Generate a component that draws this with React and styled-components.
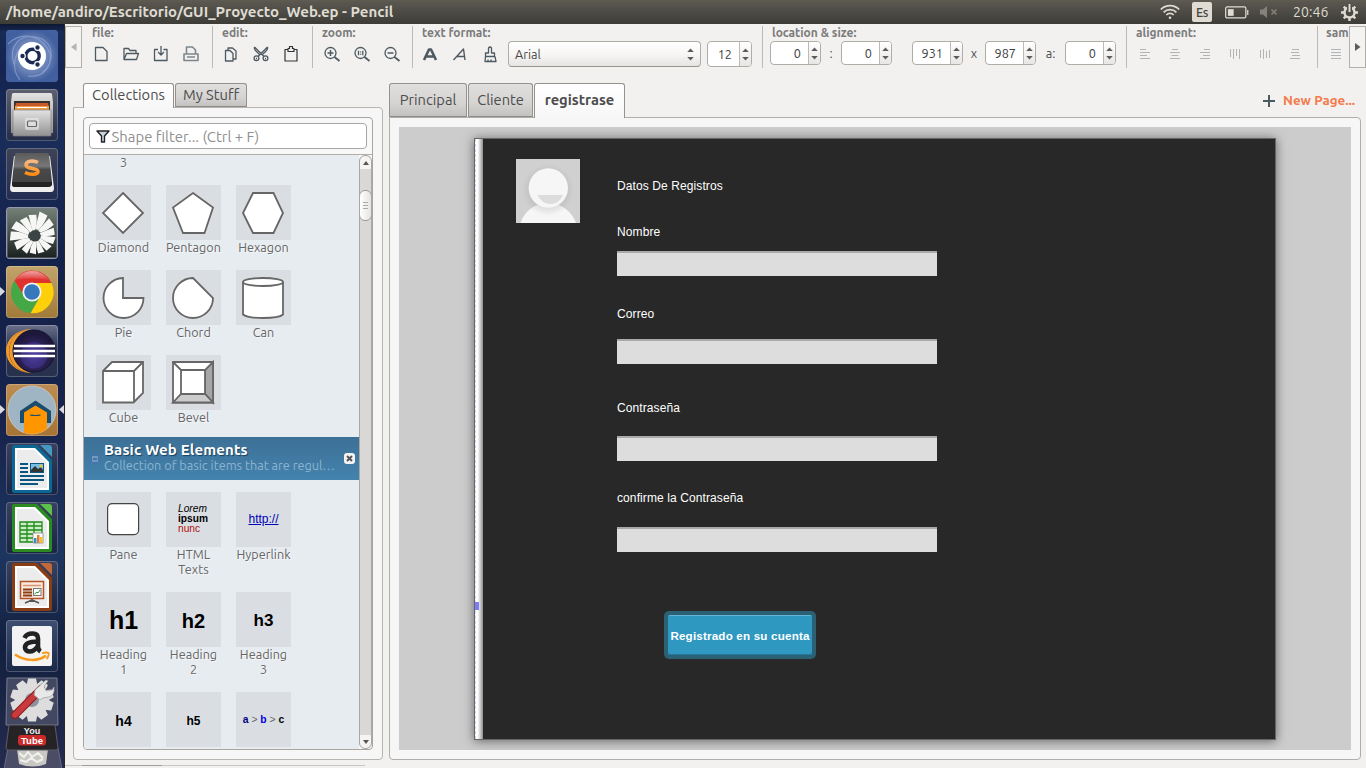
import React from "react";
import styled, { createGlobalStyle } from "styled-components";

const UI = `Ubuntu, "Noto Sans", "Open Sans", sans-serif`;
const ARIAL = `"Liberation Sans", Arial, sans-serif`;

const GlobalStyle = createGlobalStyle`
  * { box-sizing: border-box; }
  body { margin: 0; overflow: hidden; background: #f2f1f0; font-family: ${UI}; color: #4c4c4c; }
  svg { display: block; }
`;

const Screen = styled.div`
  width: 1366px; height: 768px; display: flex; flex-direction: column; overflow: hidden;
`;

const T = styled.span`
  letter-spacing: ${(p) => p.$ls || 0}px;
  white-space: nowrap;
`;

/* ---------- top panel ---------- */
const TopBar = styled.header`
  height: 24px; flex: none; display: flex; align-items: center; padding: 0 8px 0 6px;
  background: linear-gradient(#5f5d51 0, #59574f 2px, #3d3c37 100%);
  color: #dfdbd2; font-size: 14px; line-height: 24px;
`;
const WindowTitle = styled.div`
  flex: 1; font-size: 15px; font-weight: 700; white-space: nowrap;
`;
const Indicators = styled.div`
  display: flex; align-items: center; height: 24px;
`;
const Keyboard = styled.div`
  width: 20px; height: 20px; margin: 0 13px 0 12px; border-radius: 2px; background: #dfdbd2; color: #45443e;
  font-size: 12.5px; font-weight: 500; line-height: 20px; text-align: center; letter-spacing: -0.3px;
`;
const Clock = styled.div`
  width: 37px; margin: 0 11px 0 15px; white-space: nowrap; letter-spacing: 0.1px;
`;

/* ---------- launcher ---------- */
const Body = styled.div`
  flex: 1; display: flex; min-height: 0;
`;
const Launcher = styled.nav`
  width: 65px; flex: none; padding-top: 6px; display: flex; flex-direction: column; gap: 7px; overflow: hidden;
  border-right: 1px solid #2a2826;
  background: linear-gradient(#0d1733 0, #182a56 8px, #152450 45px, #1a2c58 120px, #13224a 230px, #17234c 400px, #1d3660 530px, #13203f 620px, #242b4e 100%);
`;
const TileRow = styled.div`
  position: relative; height: 52px; flex: none; padding-left: 6px;
`;
const Tile = styled.div`
  width: 52px; height: 52px; border-radius: 4px; overflow: hidden; background: ${(p) => p.$bg};
  box-shadow: inset 0 0 0 1px rgba(255, 255, 255, 0.22);
`;
const Arrow = styled.svg`
  position: absolute; top: 21px; ${(p) => (p.$right ? "right: 0;" : "left: 0;")}
`;
const Folded = styled.div`
  height: 98px; flex: none; padding-left: 4px; margin-top: -2px;
`;

/* ---------- application ---------- */
const Main = styled.main`
  flex: 1; min-width: 0; display: flex; flex-direction: column; background: #f2f1f0;
`;
const Toolbar = styled.div`
  height: 44px; flex: none; padding-top: 2px; display: flex; overflow: hidden;
`;
const ScrollEnd = styled.button`
  width: 17px; height: 42px; flex: none; padding: 0; border: 1px solid #b3b0ab; background: #f4f3f2;
  display: flex; align-items: center; justify-content: center;
`;
const Group = styled.section`
  width: ${(p) => p.$w}px; height: 42px; flex: none; overflow: hidden;
  border-right: ${(p) => (p.$last ? 0 : 1)}px solid #bcb9b6;
`;
const GroupLabel = styled.div`
  height: 14px; padding-left: ${(p) => p.$x || 9}px; color: #7b7b7b; font-size: 12px; font-weight: 700; line-height: 14px;
  white-space: nowrap;
`;
const Tools = styled.div`
  height: 28px; display: flex; align-items: center; padding-left: ${(p) => p.$x}px;
`;
const Tool = styled.div`
  width: 30px; height: 28px; flex: none; display: flex; align-items: center; justify-content: center;
  opacity: ${(p) => (p.$off ? 0.4 : 1)};
`;
const Select = styled.div`
  width: 193px; height: 26px; margin: 0 6px 0 3px; padding: 0 6px; flex: none; display: flex; align-items: center; justify-content: space-between;
  border: 1px solid #b0aca6; border-bottom-color: #9a968f; border-radius: 4px; background: linear-gradient(#fff, #f6f5f4 55%, #e6e4e2);
  font-size: 12.67px;
`;
const SpinBox = styled.div`
  width: ${(p) => p.$w || 51}px; height: ${(p) => p.$h || 24}px; margin-top: ${(p) => (p.$h ? 0 : -2)}px; margin-left: ${(p) => p.$ml || 0}px; flex: none; display: flex;
  border: 1px solid #b0aca6; border-radius: 4px; background: #fff; overflow: hidden; font-size: 12.67px;
`;
const SpinValue = styled.div`
  flex: 1; padding-right: 7px; text-align: right; line-height: ${(p) => p.$lh}px; color: #3c3c3c;
`;
const SpinArrows = styled.div`
  width: 12px; border-left: 1px solid #bdb9b3; background: linear-gradient(#fff, #e8e6e4);
  display: flex; align-items: center; justify-content: center;
`;
const Between = styled.div`
  width: ${(p) => p.$w}px; margin-top: -2px; flex: none; text-align: center; font-size: 12.67px; line-height: 24px; white-space: nowrap;
`;

const Work = styled.div`
  flex: 1; min-height: 0; display: flex; padding: 15px 5px 0 8px; gap: 6px;
`;
const LeftSide = styled.aside`
  width: 310px; flex: none;
`;
const RightSide = styled.section`
  width: 972px; flex: none;
`;
const Tabs = styled.div`
  display: flex; gap: 1px; position: relative; margin-bottom: -1px; padding-left: ${(p) => p.$x || 0}px;
`;
const Tab = styled.div`
  width: ${(p) => p.$w}px; height: ${(p) => p.$h}px; padding-top: ${(p) => p.$pt}px; text-align: center; line-height: 20px; font-size: 14.67px; white-space: nowrap;
  letter-spacing: ${(p) => p.$ls || 0}px;
  font-weight: ${(p) => (p.$bold ? 700 : 400)};
  border: 1px solid #95928e; border-radius: 3px 3px 0 0;
  border-bottom: ${(p) => (p.$on ? "0" : "1px solid #8e8c88")};
  background: ${(p) => (p.$on ? "linear-gradient(#fff, #f7f7f7)" : "linear-gradient(#e0dfdd, #d5d4d2 60%, #c3c2c0)")};
`;
const NewPage = styled.div`
  margin-left: auto; display: flex; align-items: center; gap: 8px; padding: 0 6px 0 0; color: #f47b4b; font-size: 13.33px; font-weight: 700;
`;
const LeftPanel = styled.div`
  height: 653px; padding: 9px; border: 1px solid #b8b5b1; border-radius: 0 4px 4px 4px; background: #f6f6f6;
`;
const Library = styled.div`
  width: 290px; height: 633px; border: 1px solid #a9a6a2; border-radius: 4px; background: #f8f8f8; overflow: hidden;
`;
const FilterBar = styled.div`
  height: 37px; padding: 5px; border-bottom: 1px solid #b1aeaa;
`;
const Filter = styled.div`
  width: 278px; height: 26px; padding-left: 6px; display: flex; align-items: center; gap: 1.5px;
  border: 1px solid #a9a6a2; border-radius: 4px; background: #fff; color: #8f8f8f; font-size: 14.9px;
`;
const Scroller = styled.div`
  height: 594px; display: flex;
`;
const Shapes = styled.div`
  width: 275px; height: 594px; overflow: hidden; background: #e7ecf0;
`;
const ShapeRow = styled.div`
  display: flex; gap: 15px; height: ${(p) => p.$h}px; padding-left: 12px;
`;
const Shape = styled.div`
  width: 55px; text-align: center; color: #666; font-size: 12.67px; line-height: 15px; text-shadow: 1px 1px 0 #f6f8fa;
`;
const Thumb = styled.div`
  width: 55px; height: 55px; background: #dadee2; display: flex; align-items: center; justify-content: center;
  color: #000; font-family: ${ARIAL}; text-shadow: none;
`;
const ShapeName = styled.div`
  margin: 0 -6px;
`;
const Heading = styled.b`
  font-size: ${(p) => p.$s}px; line-height: 1; padding-top: 2px;
`;
const Lorem = styled.div`
  width: 31px; margin-top: -1px; font-size: 10.2px; line-height: 10px; text-align: left; white-space: nowrap;
  i, b, span { display: block; }
  span { color: #b01010; }
`;
const Link = styled.span`
  color: #0000b8; font-size: 12px; text-decoration: underline;
`;
const Crumbs = styled.b`
  color: #000; font-size: 10.3px; white-space: nowrap;
  em { font-style: normal; font-weight: 400; color: #666; }
  u { text-decoration: none; color: #000080; }
  u + em + u { color: #0000dd; }
`;
const SectionHead = styled.div`
  height: 43px; margin-bottom: 12px; padding: 0 4px 0 7px; display: flex; align-items: center;
  background: linear-gradient(#3d7096, #4383ae);
`;
const SectionText = styled.div`
  flex: 1; margin: -2px 0 0 5px; color: #fff; font-size: 15px; font-weight: 700; line-height: 16px; text-shadow: 1px 1px 1px #17405f;
`;
const SectionSub = styled.div`
  color: #8db4cf; font-size: 12.67px; font-weight: 400; line-height: 15px; text-shadow: none; white-space: nowrap;
`;
const Scrollbar = styled.div`
  width: 13px; height: 594px; border: 1px solid #aaa7a3; border-radius: 6px; background: #dad8d6; display: flex; flex-direction: column; overflow: hidden;
`;
const ScrollButton = styled.div`
  height: 13px; flex: none; display: flex; align-items: center; justify-content: center; background: #f5f4f3;
  ${(p) => (p.$down ? "border-radius: 0 0 6px 6px; margin-top: auto;" : "border-radius: 6px 6px 0 0;")}
`;
const Handle = styled.div`
  height: 31px; margin: 21px -1px 0; flex: none; border: 1px solid #9d9a96; border-radius: 6px; background: linear-gradient(90deg, #fff, #e6e4e2);
  display: flex; align-items: center; justify-content: center;
`;
const BottomRule = styled.div`
  width: 300px; height: 1px; margin-top: 5px; margin-left: -8px; background: linear-gradient(90deg, #c9c7c4 17px, #a19e9a 17px, #a19e9a 97px, #c9c7c4 97px);
`;

const EditorPanel = styled.div`
  height: 643px; padding: 9px; border: 1px solid #b0adaa; border-radius: 0 4px 4px 4px; background: #f6f6f6;
`;
const Canvas = styled.div`
  width: 952px; height: 623px; padding: 11px 0 0 75px; background: #ccc; overflow: hidden;
`;
const Page = styled.div`
  width: 802px; height: 602px; display: flex; border: 1px solid #666; background: #282828; box-shadow: 0 1px 10px rgba(0, 0, 0, 0.5);
`;
const Ruler = styled.div`
  width: 8px; padding-top: 463px; border-left: 1px dashed #d4d4ee; background: linear-gradient(90deg, #fff 35%, #8f8f8f) border-box;
  &::before { content: ""; display: block; width: 4px; height: 8px; margin-left: -1px; background: #7c7cf8; }
`;
const Avatar = styled.div`
  margin: 20px 37px 0 33px;
`;
const Form = styled.div`
  padding-top: 40px; color: #fff; font-family: ${ARIAL}; font-size: 12px; line-height: 14px;
`;
const FieldLabel = styled.div`
  height: 14px; margin-bottom: ${(p) => p.$mb}px; white-space: nowrap; letter-spacing: 0.1px;
`;
const Field = styled.div`
  width: 320px; height: 25px; margin-bottom: ${(p) => p.$mb}px; border-top: 2px solid #a9a9a9; background: #ddd;
`;
const Submit = styled.div`
  width: 152px; height: 48px; margin-left: 47px; padding: 4px; border-radius: 5px; background: #2c6074;
`;
const SubmitFace = styled.div`
  height: 40px; border-radius: 2px; border-top: 1px solid #63b6d6; border-bottom: 1px solid #24789a; background: #2f98c1;
  line-height: 39px; text-align: center; font-size: 11.6px; font-weight: 700; white-space: nowrap; letter-spacing: 0.2px;
`;

/* ---------- icons ---------- */
const Ico = ({ children, w = 18, sw = 1.3, c = "#4e5a62" }) => (
  <svg width={w} height={w} viewBox="0 0 18 18" fill="none" stroke={c} strokeWidth={sw} strokeLinejoin="round">{children}</svg>
);
const NewIcon = () => <Ico><path d="M3.500 2.500h7.500l4 4v9h-11.500z" /></Ico>;
const OpenIcon = () => <Ico><path d="M2 14.500v-11h4.500l1.500 2h6v3M2 14.500l2.500-6h12l-2 6z" /></Ico>;
const SaveIcon = () => <Ico><path d="M6 4.500H2.500v11h12.500v-11h-3.500M9 1v9M6 7l3 3 3-3" /></Ico>;
const PrintIcon = () => <Ico sw={1.600} c="#7e868c"><path d="M4.500 9V2h6l3 3V9M4.500 9H2v6.500h14V9h-2.500M4.500 9h9M5 12h8" /></Ico>;
const CopyIcon = () => <Ico><path d="M3.500 5.500h4.500l3 3v7.500h-7.500zM6 5V3h4.500l3.500 3V14h-2.500" /></Ico>;
const CutIcon = () => (
  <Ico><path d="M2.500 2l9.500 9.500M2.500 2q-.5 2 1 3.500l4 4M15.500 2L6 11.500M15.500 2q.5 2-1 3.500l-4 4" /><circle cx="4.500" cy="13.300" r="2.400" /><circle cx="13.500" cy="13.300" r="2.400" /><path d="M4 13.500h1M13 13.500h1" /></Ico>
);
const PasteIcon = () => <Ico sw={1.200} c="#303438"><path d="M5.500 4.500H3v11.500h12V4.500h-2.500M6 6.500V3.500h1.500v-2h3v2H12v3z" /></Ico>;
const Zoom = ({ kind }) => (
  <Ico>
    <circle cx="7.500" cy="8" r="5.500" /><path d="M11.500 12l5 4" strokeWidth="1.800" />
    {kind === "one" ? <path d="M5.500 5.800v4.400M9.800 5.800v4.400M7.600 6.500v.9M7.600 8.800v.9" /> : <path d={kind === "in" ? "M4.500 8h6M7.500 5v6" : "M4.500 8h6"} strokeWidth="1.500" />}
  </Ico>
);
const BoldIcon = () => <Ico sw={2.600}><path d="M3 15L8 4.500h2L15 15M5.500 11.500h7" /></Ico>;
const ItalicIcon = () => <Ico sw={1.400}><path d="M2.500 15L12.500 4l1.500 11M6 11.500h7.500" /></Ico>;
const BrushIcon = () => <Ico><path d="M7.500 8V3q1.500-2 3 0V8h3v3.500h-9V8zM4.500 11.500L4 16.500h11l-1-5M7 14.500v2M10 14.500v2" /></Ico>;
const ALIGN = {
  left: "M4 4.500h6M4 7.500h10M4 10.500h7M4 13.500h10",
  center: "M6 4.500h6M4 7.500h10M5.500 10.500h7M4 13.500h10",
  right: "M8 4.500h6M4 7.500h10M7 10.500h7M4 13.500h10",
  top: "M4.500 4v8M7.500 4v10M10.500 4v7M13.500 4v10",
  middle: "M4.500 5v8M7.500 4v10M10.500 6v7M13.500 5v8",
  bottom: "M6 4.500h7M5 7.500h8M6 10.500h8M4 13.500h10",
  same: "M4 4.500h10M4 7.500h10M4 10.500h10M4 13.500h10",
};
const AlignIcon = ({ k }) => <Ico sw={1}><path d={ALIGN[k]} /></Ico>;
const UpDown = ({ h = 13 }) => (
  <svg width="7" height={h} viewBox="0 0 7 13" fill="#5c5c5c"><path d="M.2 4L3.500.5 6.800 4zM.2 9h6.600L3.500 12.500z" /></svg>
);

const Spin = ({ v, ...p }) => (
  <SpinBox {...p}>
    <SpinValue $lh={(p.$h || 24) - 2}>{v}</SpinValue>
    <SpinArrows><UpDown /></SpinArrows>
  </SpinBox>
);

const WifiIcon = () => (
  <svg width="20" height="16" viewBox="0 0 20 16" fill="none" stroke="#dfdbd2" strokeWidth="1.700">
    <path d="M.8 5.500a13 13 0 0 1 18.400 0M3.600 8.300a9 9 0 0 1 12.800 0M6.300 11a5.200 5.200 0 0 1 7.400 0" /><circle cx="10" cy="13.800" r="1.300" fill="#dfdbd2" stroke="none" />
  </svg>
);
const BatterySvg = styled.svg`
  margin-right: 11px;
`;
const BatteryIcon = () => (
  <BatterySvg width="24" height="13" viewBox="0 0 25 13" fill="none" stroke="#dfdbd2">
    <rect x=".7" y=".7" width="21" height="11.500" rx="1.500" strokeWidth="1.300" /><path d="M3 3h6v7H3z" fill="#dfdbd2" stroke="none" /><path d="M23.700 4v5" strokeWidth="1.300" />
  </BatterySvg>
);
const MuteIcon = () => (
  <svg width="18" height="14" viewBox="0 0 18 14" fill="#85827a"><path d="M0 4.500h3L7 1v12L3 9.500H0z" /><path d="M11.500 4.500l5 5M16.500 4.500l-5 5" stroke="#85827a" strokeWidth="1.500" /></svg>
);
const GearIcon = () => (
  <svg width="17" height="17" viewBox="0 0 17 17" fill="none" stroke="#dfdbd2">
    <circle cx="8.500" cy="8.500" r="5" strokeWidth="2.400" />
    <path d="M8.500 13.500V17M3.500 8.500H0M13.500 8.500H17M5 12l-2.300 2.300M12 12l2.300 2.300M5 5L2.700 2.700M12 5l2.300-2.300" strokeWidth="2.400" />
    <path d="M8.500 0v8" stroke="#4d4b45" strokeWidth="5" /><path d="M8.500 0v8" strokeWidth="2" />
  </svg>
);

/* ---------- launcher artwork ---------- */
const Art = ({ children }) => <svg width="52" height="52" viewBox="0 0 52 52">{children}</svg>;

const Dash = () => (
  <Art>
    <defs><radialGradient id="dash"><stop offset="0" stopColor="#a9b9dd" /><stop offset="1" stopColor="#42609f" /></radialGradient></defs>
    <rect width="52" height="52" rx="4" fill="url(#dash)" />
    <g fill="none" stroke="#9cb0dc" strokeWidth="1.200" opacity=".6">
      <path d="M8 34C2 16 14 4 30 7c18 4 20 24 6 36M2 14c14-14 36-8 42 10M14 50C4 38 8 16 26 12M22 46c14 2 24-8 22-22" />
    </g>
    <circle cx="26" cy="26" r="14" fill="#fff" />
    <circle cx="26.500" cy="26" r="6.700" fill="none" stroke="#1c2b56" strokeWidth="3.400" />
    <g stroke="#fff" strokeWidth="1.200" fill="#1c2b56"><circle cx="16.500" cy="26" r="2.800" /><circle cx="31.500" cy="17.500" r="2.800" /><circle cx="31.500" cy="34.500" r="2.800" /></g>
  </Art>
);
const Files = () => (
  <Art>
    <defs><linearGradient id="cab" x2="0" y2="1"><stop offset="0" stopColor="#e2e2e2" /><stop offset="1" stopColor="#929292" /></linearGradient></defs>
    <path d="M6 5q0-1 2-1h36q2 0 2 1l1 8v31H5V13z" fill="url(#cab)" />
    <path d="M8 12h36v10H8z" fill="#35322e" /><path d="M10 14h32l1 4H9z" fill="#c65a2b" /><path d="M9 17h34v5H9z" fill="#ee9a4b" /><path d="M11 18.500h30" stroke="#fff" />
    <rect x="7" y="21" width="38" height="26" rx="1" fill="url(#cab)" stroke="#7f7f7f" strokeWidth=".7" />
    <rect x="19" y="29" width="14" height="12" rx="2" fill="#eee" opacity=".6" /><rect x="21.500" y="32" width="9" height="5.500" rx="1" fill="#ddd" stroke="#666" strokeWidth="1.200" />
  </Art>
);
const Sublime = () => (
  <Art>
    <defs>
      <linearGradient id="key" x2="0" y2="1"><stop offset="0" stopColor="#5a5a5a" /><stop offset=".4" stopColor="#777" /><stop offset=".5" stopColor="#4a4a4a" /><stop offset="1" stopColor="#404040" /></linearGradient>
      <linearGradient id="ess" x2="0" y2="1"><stop offset="0" stopColor="#f6b884" /><stop offset="1" stopColor="#ff8c12" /></linearGradient>
    </defs>
    <path d="M8 8L4 40q0 4 3 4h38q3 0 3-4L44 8z" fill="#eee" />
    <path d="M9 6q0-1 2-1h30q2 0 2 1l3 28q0 4-3 4H9q-3 0-3-4z" fill="url(#key)" /><path d="M6 34h40v3q-1 2-3 2H9q-3 0-3-2z" fill="#222" />
    <path d="M32 14.500c-5-2.500-12-1.500-12 2.500 0 4.500 12 2.500 12 6.500 0 3-7 4-13 1" fill="none" stroke="url(#ess)" strokeWidth="3.600" />
  </Art>
);
const BLADES = [1.15, 1.05, 0.95, 0.95, 0.9, 0.85, 0.85, 0.9, 1.05, 1.18, 1.15, 1, 1.02];
const Turbine = () => (
  <Art>
    <defs><linearGradient id="tur" x2="0" y2="1"><stop offset="0" stopColor="#738076" /><stop offset="1" stopColor="#1b2222" /></linearGradient></defs>
    <rect x="1.500" y="1.500" width="49" height="49" fill="url(#tur)" />
    {BLADES.map((s, i) => (
      <path key={i} d="M-.2-6Q1-14 2.500-21.500L9.500-18.500Q7.500-11 2.600-5.400z" fill="#f6f6f4" transform={`translate(29 29) rotate(${i * 27.7 + 4}) scale(${s})`} />
    ))}
    <circle cx="29" cy="29" r="5.500" fill="#3a4444" />
  </Art>
);
const Chrome = () => (
  <Art>
    <defs><linearGradient id="shine" x2="0" y2="1"><stop offset="0" stopColor="#fff" stopOpacity=".55" /><stop offset="1" stopColor="#fff" stopOpacity="0" /></linearGradient></defs>
    <path d="M24.500 47A21 21 0 0 0 45.500 17H26l8 13.500z" fill="#fdd00a" />
    <path d="M8.500 14.500A21 21 0 0 0 24.500 47L34 30.500H18.500z" fill="#45a846" />
    <path d="M8.500 14.500A21 21 0 0 1 45.500 17H26l-7.500 13.500z" fill="#df3230" />
    <circle cx="26" cy="26" r="9.600" fill="#f3f3f3" /><circle cx="26" cy="26" r="7.800" fill="#3778bd" />
    <path d="M8.500 14.500A21 21 0 0 1 43.500 14.500Q26 10 8.500 14.500z" fill="url(#shine)" />
  </Art>
);
const Eclipse = () => (
  <Art>
    <defs><radialGradient id="ecl" cy=".6"><stop offset="0" stopColor="#4c3fa0" /><stop offset=".6" stopColor="#3a2d7a" /><stop offset=".66" stopColor="#2a2153" /><stop offset="1" stopColor="#1e173c" /></radialGradient></defs>
    <path d="M25 4A22 22 0 0 0 25 48A25 22 0 0 1 25 4z" fill="#f29a29" />
    <path d="M25 4C-4 6-4 46 25 48C2 42 2 10 25 4z" fill="#f29a29" />
    <circle cx="28" cy="26" r="21" fill="url(#ecl)" stroke="#17142f" />
    <path d="M8 21h41M7.500 26h41.500M8 31h41" stroke="#fff" strokeWidth="2.300" />
  </Art>
);
const Pencil = () => (
  <Art>
    <clipPath id="pc"><circle cx="26" cy="26" r="24" /></clipPath><circle cx="26" cy="26" r="24" fill="#9fb5c4" stroke="#d0d4d4" strokeWidth=".7" />
    <g clipPath="url(#pc)"><path d="M14 39V27l15.500-10.500L45 27v12z" fill="#194d6d" /><path d="M18 52V28.500l11.500-7L41 28.500V52z" fill="#ff9600" /><path d="M24 31q5.500 1 10.500 0" stroke="#194d6d" strokeWidth="1.200" fill="none" /></g>
  </Art>
);
const Doc = ({ c, light, children }) => (
  <Art>
    <path d="M8 2h23l15 15v31q0 2-2 2H8q-2 0-2-2V4q0-2 2-2z" fill={c} /><path d="M34 2h9q3 0 3 3v9z" fill={light} />
    <path d="M9 5h20l14 14v28H9z" fill="#fff" /><path d="M11 7h17l13 13v25H11z" fill="#ececec" />{children}
  </Art>
);
const Writer = () => (
  <Doc c="#0c6792" light="#4697c2">
    <path d="M14 21h8M14 25h8M14 29h8M14 33h24M14 37h24M14 41h18" stroke="#0c5782" strokeWidth="2" />
    <rect x="24.500" y="20.500" width="13" height="9" fill="#79bde4" stroke="#0c5782" /><path d="M25 29v-2l4-4 3 3 3-2 2 3v2z" fill="#333" /><circle cx="35" cy="23" r="1.500" fill="#f4c430" />
  </Doc>
);
const Calc = () => (
  <Doc c="#2b8a20" light="#5cc24a">
    <path d="M14 20h22v20H14z" fill="#cdeec4" stroke="#1f8a1a" strokeWidth="1.300" /><path d="M14 24h22M14 28h22M14 32h22M14 36h22M21 20v20M28 20v20" stroke="#1f8a1a" strokeWidth="1.300" />
    <path d="M27 31h10v10H27z" fill="#fff" stroke="#888" strokeWidth=".8" /><path d="M28 36h2.500v5H28z" fill="#2f8fd0" /><path d="M31 33h2.500v8H31z" fill="#e8792b" /><path d="M34 35h2.500v6H34z" fill="#eec22c" />
  </Doc>
);
const Impress = () => (
  <Doc c="#8a3c12" light="#c2693a">
    <rect x="14.500" y="20.500" width="23" height="17" fill="#fbe9de" stroke="#b3532a" strokeWidth="1.500" />
    <path d="M17 24.500h18" stroke="#d9956f" strokeWidth="1.500" /><path d="M17 28.500h9M17 31.500h9M17 34.500h9" stroke="#8a3c12" strokeWidth="2" /><rect x="27.500" y="27.500" width="7.500" height="7" fill="#fff" stroke="#777" /><path d="M28.500 33l2.500-2 1 1 2-3" stroke="#2c9a3a" fill="none" />
    <path d="M26 38v3M26 39l-7 3M26 39l7 3" stroke="#555" strokeWidth="1.500" />
  </Doc>
);
const Amazon = () => (
  <Art>
    <rect x="6" y="6" width="40" height="40" rx="2" fill="#f3f3f3" />
    <path d="M18.500 18C20 14.500 23 13.500 26.500 13.500c4 0 5.500 2 5.500 5v8c0 3 1 4 2.500 5M32 21.500c-8 0-13 1.500-13 6 0 5 8 6 12.500-1" fill="none" stroke="#222" strokeWidth="4.600" />
    <path d="M9 34.500c10 7 24 7 31 1" fill="none" stroke="#f79a1c" strokeWidth="2.500" /><path d="M36 33.500c3-1.500 6-1 6.500-.5s0 4-2 6" fill="none" stroke="#f79a1c" strokeWidth="1.800" />
  </Art>
);

const TILES = [
  [Dash, "#3f5c9d"], [Files, "linear-gradient(#5c6070, #222d4a)"], [Sublime, "linear-gradient(#3d4357, #222d52)"], [Turbine, "#777b8f"],
  [Chrome, "linear-gradient(#c1a46c, #a07a38)", 1], [Eclipse, "linear-gradient(#69708a, #28324f 45%)"], [Pencil, "linear-gradient(#bd8c52, #a67435)", 2],
  [Writer, "linear-gradient(#38415f, #172444)"], [Calc, "linear-gradient(#38415f, #172444)"], [Impress, "linear-gradient(#38415f, #172444)"], [Amazon, "linear-gradient(#3d4e70, #192747)"],
];

const YouLabel = styled.text`
  font-family: ${ARIAL}; font-weight: 700; font-size: ${(p) => p.$s}px; text-anchor: middle;
`;
const FoldedStack = () => (
  <svg width="58" height="92" viewBox="0 0 58 92">
    <path d="M3 1h50l1 47H2z" fill="#424861" stroke="#777c91" />
    <g transform="translate(28 23)" fill="#ddd">
      {Array.from({ length: 10 }, (_, i) => <path key={i} d="M-4-21.500h8l1.500 7h-11z" transform={`rotate(${i * 36})`} />)}
      <circle r="17" /><circle r="7" fill="#8e929d" />
    </g>
    <path d="M11 38L37 12" stroke="#8d1a1d" strokeWidth="8" strokeLinecap="round" /><path d="M11 38L35 14" stroke="#c93a3c" strokeWidth="6" strokeLinecap="round" />
    <path d="M31 13L42 3l2 1-4 5 2 5 6-1 2-3q1 8-5 10l-6 1-3 2-6-5z" fill="#e8e8e8" stroke="#999" strokeWidth=".7" />
    <path d="M4 71h50l4 21H0z" fill="#4a4d65" stroke="#686c80" /><path d="M13 72l31 0-2 15q-13 5-27 0z" fill="#c9c9c4" />
    <path d="M15 76l5 4 4-5 4 5 6-4 5 5M16 83l6 2 5-4 6 4 6-3" stroke="#f1f1ee" strokeWidth="2" fill="none" />
    <path d="M5 48h46l3 23q0 2-2 2H4q-2 0-2-2z" fill="#252326" stroke="#5d5d67" />
    <YouLabel x="28" y="57" $s={9} fill="#f1f1f1">You</YouLabel>
    <rect x="14" y="58" width="28" height="10.500" rx="3" fill="#cd2a2a" /><YouLabel x="28" y="67" $s={9.500} fill="#fff">Tube</YouLabel>
  </svg>
);

/* ---------- shape pictures ---------- */
const Pic = ({ children }) => (
  <svg width="55" height="55" viewBox="0 0 55 55" fill="#fff" stroke="#666" strokeWidth="1.800">{children}</svg>
);
const PICS = {
  Diamond: <path d="M27 8l20 20-20 20L7 28z" />,
  Pentagon: <path d="M27 8l20 14.500L38.500 48H17L7 22.500z" />,
  Hexagon: <path d="M17 8h20.500L47 28l-9.500 20H17L7 28z" />,
  Pie: <path d="M27 8a20 20 0 1 0 20.500 20H27z" />,
  Chord: <path d="M27 8a20 20 0 1 0 20 20z" />,
  Can: <><path d="M7 12v32.500q4 3.500 20 3.500t20-3.500V12" /><ellipse cx="27" cy="12" rx="20" ry="4" /></>,
  Cube: <><path d="M7 16l9-9h31v31l-9.500 9.500H7z" /><path d="M7 16h31v31.500M38 16l9-9" /></>,
  Bevel: <><path d="M7 7h40v40.500H7z" /><path d="M47 7v40.500L39 39V15z" fill="#a6a6a6" /><path d="M7 47.500h40L39 39H15z" fill="#ccc" /><path d="M15 15h24v24H15zM7 7l8 8" /></>,
};

const Item = ({ name, children }) => (
  <Shape>
    <Thumb>{children || <Pic>{PICS[name]}</Pic>}</Thumb>
    {name && <ShapeName>{name}</ShapeName>}
  </Shape>
);
const Num = ({ n, s }) => (
  <Shape><Thumb><Heading $s={s}>h{n}</Heading></Thumb>Heading<br />{n}</Shape>
);

export default function App() {
  return (
    <Screen>
      <GlobalStyle />
      <TopBar>
        <WindowTitle>/home/andiro/Escritorio/GUI_Proyecto_Web.ep - Pencil</WindowTitle>
        <Indicators>
          <WifiIcon /><Keyboard>Es</Keyboard><BatteryIcon /><MuteIcon /><Clock>20:46</Clock><GearIcon />
        </Indicators>
      </TopBar>
      <Body>
        <Launcher>
          {TILES.map(([Icon, bg, run], i) => (
            <TileRow key={i}>
              <Tile $bg={bg}><Icon /></Tile>
              {run && <Arrow width="5" height="9"><path d="M0 0l5 4.500L0 9z" fill="#d8dae0" /></Arrow>}
              {run === 2 && <Arrow $right width="5" height="9"><path d="M5 0L0 4.500 5 9z" fill="#d8dae0" /></Arrow>}
            </TileRow>
          ))}
          <Folded><FoldedStack /></Folded>
        </Launcher>
        <Main>
          <Toolbar>
            <ScrollEnd><svg width="6" height="8"><path d="M5.500 0v8L0 4z" fill="#b5b3b0" /></svg></ScrollEnd>
            <Group $w={131}>
              <GroupLabel $x={10}>file:</GroupLabel>
              <Tools $x={4}><Tool><NewIcon /></Tool><Tool><OpenIcon /></Tool><Tool><SaveIcon /></Tool><Tool><PrintIcon /></Tool></Tools>
            </Group>
            <Group $w={100}>
              <GroupLabel>edit:</GroupLabel>
              <Tools $x={3}><Tool><CopyIcon /></Tool><Tool><CutIcon /></Tool><Tool><PasteIcon /></Tool></Tools>
            </Group>
            <Group $w={100}>
              <GroupLabel>zoom:</GroupLabel>
              <Tools $x={4}><Tool><Zoom kind="in" /></Tool><Tool><Zoom kind="one" /></Tool><Tool><Zoom kind="out" /></Tool></Tools>
            </Group>
            <Group $w={350}>
              <GroupLabel>text format:</GroupLabel>
              <Tools $x={2}>
                <Tool><BoldIcon /></Tool><Tool><ItalicIcon /></Tool><Tool><BrushIcon /></Tool>
                <Select>Arial<UpDown /></Select>
                <Spin v="12" $w={45} $h={26} />
              </Tools>
            </Group>
            <Group $w={364}>
              <GroupLabel>location &amp; size:</GroupLabel>
              <Tools $x={7}>
                <Spin v="0" /><Between $w={20}>:</Between><Spin v="0" />
                <Spin v="931" $ml={20} /><Between $w={22}>x</Between><Spin v="987" /><Between $w={29}>a:</Between><Spin v="0" />
              </Tools>
            </Group>
            <Group $w={191}>
              <GroupLabel>alignment:</GroupLabel>
              <Tools $x={3}>{["left", "center", "right", "top", "middle", "bottom"].map((k) => <Tool $off key={k}><AlignIcon k={k} /></Tool>)}</Tools>
            </Group>
            <Group $w={31} $last>
              <GroupLabel $x={8}>sam</GroupLabel>
              <Tools $x={3}><Tool $off><AlignIcon k="same" /></Tool></Tools>
            </Group>
            <ScrollEnd><svg width="6" height="8"><path d="M0 0v8l5.500-4z" fill="#5c5c5c" /></svg></ScrollEnd>
          </Toolbar>
          <Work>
            <LeftSide>
              <Tabs $x={10}>
                <Tab $on $w={91} $h={25} $pt={1}>Collections</Tab>
                <Tab $w={72} $h={24} $pt={1}>My Stuff</Tab>
              </Tabs>
              <LeftPanel>
                <Library>
                  <FilterBar>
                    <Filter>
                      <svg width="14" height="13" viewBox="0 0 14 13"><path d="M1 1h12L8.500 6v6h-3V6z" fill="#c7d3df" stroke="#222" strokeWidth="1.400" strokeLinejoin="round" /></svg>
                      <T>Shape filter... (Ctrl + F)</T>
                    </Filter>
                  </FilterBar>
                  <Scroller>
                    <Shapes>
                      <ShapeRow $h={30}><Shape>3</Shape></ShapeRow>
                      <ShapeRow $h={85}><Item name="Diamond" /><Item name="Pentagon" /><Item name="Hexagon" /></ShapeRow>
                      <ShapeRow $h={85}><Item name="Pie" /><Item name="Chord" /><Item name="Can" /></ShapeRow>
                      <ShapeRow $h={82}><Item name="Cube" /><Item name="Bevel" /></ShapeRow>
                      <SectionHead>
                        <svg width="8" height="8"><path d="M.5.5h7v7h-7z" fill="#6d9cc0" stroke="#4a6fb0" /><path d="M2 4h4" stroke="#24507a" /></svg>
                        <SectionText><T $ls={0.15}>Basic Web Elements</T><SectionSub>Collection of basic items that are regul…</SectionSub></SectionText>
                        <svg width="11" height="11"><rect width="11" height="11" rx="3" fill="#f4f4f4" /><path d="M3 3l5 5M8 3L3 8" stroke="#555" strokeWidth="2" /></svg>
                      </SectionHead>
                      <ShapeRow $h={100}>
                        <Item name="Pane"><svg width="33" height="33"><rect x=".6" y=".6" width="31" height="31" rx="4.500" fill="#fff" stroke="#444" strokeWidth="1.200" /></svg></Item>
                        <Shape><Thumb><Lorem><i>Lorem</i><b>ipsum</b><span>nunc</span></Lorem></Thumb>HTML<br />Texts</Shape>
                        <Item name="Hyperlink"><Link>http://</Link></Item>
                      </ShapeRow>
                      <ShapeRow $h={100}><Num n={1} s={25} /><Num n={2} s={20} /><Num n={3} s={17} /></ShapeRow>
                      <ShapeRow $h={55}>
                        <Item><Heading $s={14}>h4</Heading></Item>
                        <Item><Heading $s={12}>h5</Heading></Item>
                        <Item><Crumbs><u>a</u> <em>&gt;</em> <u>b</u> <em>&gt;</em> c</Crumbs></Item>
                      </ShapeRow>
                    </Shapes>
                    <Scrollbar>
                      <ScrollButton><svg width="6" height="4"><path d="M0 4l3-4 3 4z" fill="#555" /></svg></ScrollButton>
                      <Handle><svg width="5" height="7"><path d="M0 .5h5M0 3.500h5M0 6.500h5" stroke="#aaa" /></svg></Handle>
                      <ScrollButton $down><svg width="6" height="4"><path d="M0 0h6L3 4z" fill="#555" /></svg></ScrollButton>
                    </Scrollbar>
                  </Scroller>
                </Library>
              </LeftPanel>
              <BottomRule />
            </LeftSide>
            <RightSide>
              <Tabs>
                <Tab $w={78} $h={34} $pt={6}>Principal</Tab>
                <Tab $w={65} $h={34} $pt={6}>Cliente</Tab>
                <Tab $on $bold $w={91} $h={35} $pt={6}>registrase</Tab>
                <NewPage><svg width="12" height="12"><path d="M6 0v12M0 6h12" stroke="#4c5a64" strokeWidth="2" /></svg>New Page...</NewPage>
              </Tabs>
              <EditorPanel>
                <Canvas>
                  <Page>
                    <Ruler />
                    <Avatar>
                      <svg width="64" height="64" viewBox="0 0 64 64">
                        <defs><radialGradient id="halo"><stop offset=".6" stopColor="#999" stopOpacity=".8" /><stop offset="1" stopColor="#999" stopOpacity="0" /></radialGradient></defs>
                        <rect width="64" height="64" fill="#d0d0d0" /><path d="M4.500 64C8 53 18 44 32 44s24 9 28 20z" fill="#f6f6f6" />
                        <circle cx="32" cy="31" r="26" fill="url(#halo)" opacity=".4" /><circle cx="32.300" cy="29" r="19.700" fill="#f6f6f6" />
                        <path d="M21.500 36H47q-4 9-12.500 9T21.500 36z" fill="#dcdcdc" />
                      </svg>
                    </Avatar>
                    <Form>
                      <FieldLabel $mb={32}>Datos De Registros</FieldLabel>
                      <FieldLabel $mb={12}>Nombre</FieldLabel><Field $mb={31} />
                      <FieldLabel $mb={18}>Correo</FieldLabel><Field $mb={37} />
                      <FieldLabel $mb={21}>Contraseña</FieldLabel><Field $mb={30} />
                      <FieldLabel $mb={22}>confirme la Contraseña</FieldLabel><Field $mb={59} />
                      <Submit><SubmitFace>Registrado en su cuenta</SubmitFace></Submit>
                    </Form>
                  </Page>
                </Canvas>
              </EditorPanel>
            </RightSide>
          </Work>
        </Main>
      </Body>
    </Screen>
  );
}
